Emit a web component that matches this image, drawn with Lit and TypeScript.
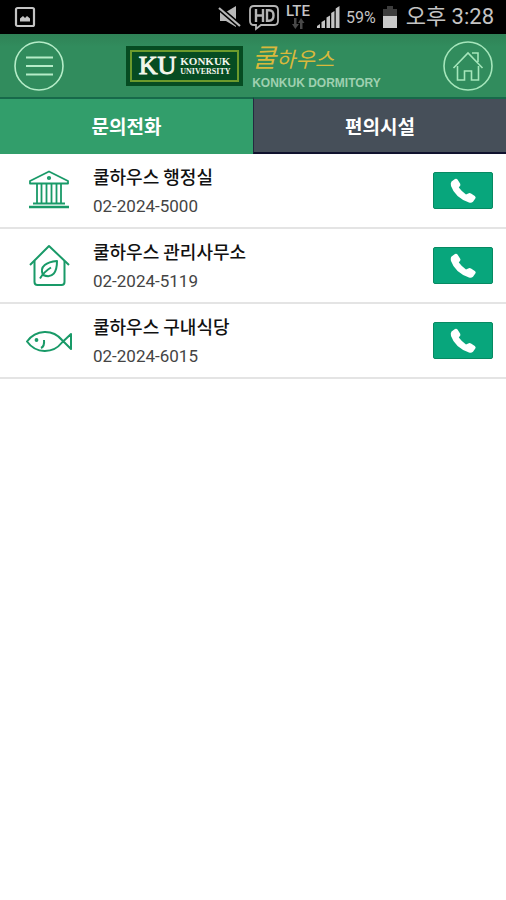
import { LitElement, html, css, svg } from "lit";
import { customElement, state } from "lit/decorators.js";

interface Contact {
  name: string;
  phone: string;
  icon: unknown;
}

const bankIcon = svg`
  <path d="M4 15.500V13L23 3.500 42 13v2.500z" />
  <path d="M11 16v19M15.500 16v19M20.500 16v19M25.500 16v19M30.500 16v19M35 16v19" />
  <path d="M7 35.500h32" stroke-width="2" />
  <path d="M3 39h40" stroke-width="2.500" />
  <circle cx="23" cy="10" r="1.200" />`;

const ecoHouseIcon = svg`
  <path d="M4 22 23 3l20 19" stroke-width="2" />
  <path d="M8.500 18v21q0 3 3 3h24q3 0 3-3V18" stroke-width="2" />
  <path d="M17 32c-4-9 4-13 14-14 0 11-4 18-14 14z" stroke-width="2" />
  <path d="M14 35.500c3-5 6-8 11-11" stroke-width="2" />`;

const fishIcon = svg`
  <path d="M1 23.500C10 11 27 11 36 22l9 9V16l-9 8.500C27 36 10 36 1 23.500z" stroke-width="2" />
  <path d="M18 22c.5 4-1 7-3 8" stroke-width="2" />
  <circle cx="10.500" cy="22" r="1" />`;

const contacts: Contact[] = [
  { name: "쿨하우스 행정실", phone: "02-2024-5000", icon: bankIcon },
  { name: "쿨하우스 관리사무소", phone: "02-2024-5119", icon: ecoHouseIcon },
  { name: "쿨하우스 구내식당", phone: "02-2024-6015", icon: fishIcon },
];

@customElement("status-bar")
class StatusBar extends LitElement {
  static styles = css`
    :host {
      display: flex;
      align-items: center;
      height: 34px;
      padding: 0 12px 0 14px;
      box-sizing: border-box;
      background: #000;
      color: #c4c4c4;
      font-family: Roboto, "Noto Sans CJK KR", sans-serif;
      white-space: nowrap;
    }
    svg {
      display: block;
      flex: none;
    }
    .spacer {
      flex: 1;
    }
    .icons {
      display: flex;
      align-items: center;
      gap: 6px;
    }
    .battery {
      font-size: 16px;
    }
    .lte {
      display: flex;
      flex-direction: column;
      align-items: center;
      font-size: 15px;
      font-weight: 500;
      line-height: 13px;
    }
    .time {
      margin-left: 8px;
      font-size: 22px;
      line-height: 34px;
    }
  `;

  render() {
    return html`
      <svg width="22" height="22" viewBox="0 0 22 22" fill="none" stroke="#c4c4c4">
        <rect x="2" y="2" width="18" height="18" rx="1.500" stroke-width="2.200" />
        <path d="M6 15.500v-3l3-2.500 2 2 2-2 3 2.500v3z" fill="#c4c4c4" stroke="none" />
      </svg>
      <span class="spacer"></span>
      <div class="icons">
        <svg width="24" height="24" viewBox="0 0 24 24">
          <path d="M2 7h6l10-6v21l-10-6H2z" fill="#b8b8b8" />
          <path d="M1 3l21 18" stroke="#000" stroke-width="5" />
          <path d="M1 3l21 18" stroke="#b8b8b8" stroke-width="2.200" />
        </svg>
        <svg width="32" height="28" viewBox="0 0 32 28" fill="none" stroke="#b4b4b4">
          <path d="M6 3h20q4 0 4 4v11q0 4-4 4H13l-5 4v-4H6q-4 0-4-4V7q0-4 4-4z" stroke-width="1.800" />
          <path d="M8 6v13M15 6v13M8 12.500h7M19 7.200v10.600h2q4.500 0 4.500-5.300T21 7.200z" stroke-width="2.400" />
        </svg>
        <div class="lte">
          <span>LTE</span>
          <svg width="14" height="11" viewBox="0 0 14 11" fill="#484848">
            <path d="M3 0h2.500v6H8l-3.700 5L1 6h2zM9 11V5H7l3-5 3.500 5h-2v6z" />
          </svg>
        </div>
        <svg width="24" height="24" viewBox="0 0 24 24" fill="#c4c4c4">
          <path d="M1 23v-2l3-2v4zM5.500 23v-6L9 15v8zM10.500 23V12.500l3.500-2V23zM15.200 23V8l3.300-2v17zM19.700 23V3.500L23.500 1v22z" />
        </svg>
        <span class="battery">59%</span>
        <svg width="16" height="24" viewBox="0 0 16 24">
          <path d="M5 1h6v3h4v7H1V4h4z" fill="#3d3d3d" />
          <path d="M1 11h14v12H1z" fill="#c9c9c9" />
        </svg>
      </div>
      <span class="time">오후 3:28</span>
    `;
  }
}

@customElement("app-root")
class AppRoot extends LitElement {
  @state() private tab = 0;

  static styles = css`
    :host {
      display: block;
      min-height: 100vh;
      background: #fff;
      font-family: Roboto, "Noto Sans CJK KR", sans-serif;
    }
    button {
      padding: 0;
      border: 0;
      background: none;
      font: inherit;
      color: inherit;
      cursor: pointer;
    }
    svg {
      display: block;
      flex: none;
    }
    .header {
      display: flex;
      align-items: center;
      justify-content: space-between;
      height: 63px;
      padding: 0 13px 0 14px;
      background: linear-gradient(#2f8256, #318c5d 20%, #318c5d);
    }
    .brand {
      display: flex;
      align-items: center;
      gap: 9px;
    }
    .crest {
      padding: 4px;
      background: #064c22;
    }
    .plate {
      display: flex;
      align-items: center;
      justify-content: center;
      gap: 4px;
      width: 105px;
      height: 28px;
      border: 2px solid #6c9a2c;
      color: #f3f6ec;
      font-family: "Liberation Serif", serif;
    }
    .initials {
      font-size: 26px;
      line-height: 28px;
      -webkit-text-stroke: 1px #f3f6ec;
    }
    .school {
      display: flex;
      flex-direction: column;
      font-weight: 700;
      font-size: 11px;
      line-height: 11px;
    }
    .school small {
      font-size: 8px;
      line-height: 9px;
    }
    .dorm {
      display: flex;
      flex-direction: column;
      gap: 4px;
    }
    .script {
      color: #d9b93c;
      font-family: "Noto Sans CJK KR", sans-serif;
      font-size: 21px;
      font-style: italic;
      font-weight: 400;
      line-height: 28px;
    }
    .script::first-letter {
      font-size: 26px;
    }
    .latin {
      color: #9fd0b0;
      font-family: "Liberation Sans", sans-serif;
      font-size: 12px;
      font-weight: 700;
      line-height: 14px;
    }
    .tabs {
      display: grid;
      grid-template-columns: 1fr 1fr;
      height: 57px;
    }
    .tab {
      border-top: 2px solid #17694a;
      background: #464f59;
      color: #fff;
      font-family: "Noto Sans CJK KR", sans-serif;
      font-size: 19px;
      font-weight: 700;
      border-bottom: 2px solid #10122e;
      border-left: 1px solid #25293f;
    }
    .tab.active {
      background: #329e6b;
      border-left: 0;
      border-bottom-color: #329e6b;
    }
    .list {
      margin: 0;
      padding: 0;
      list-style: none;
    }
    .row {
      display: flex;
      align-items: center;
      height: 75px;
      padding: 0 13px 0 26px;
      box-sizing: border-box;
      border-bottom: 2px solid #e4e4e4;
    }
    .info {
      display: flex;
      flex: 1;
      flex-direction: column;
      margin-left: 21px;
    }
    .name {
      color: #111;
      font-family: "Noto Sans CJK KR", sans-serif;
      font-size: 18px;
      font-weight: 500;
      line-height: 30px;
    }
    .phone {
      color: #444;
      font-size: 17px;
      line-height: 30px;
    }
    .call {
      display: grid;
      place-items: center;
      width: 60px;
      height: 37px;
      border: 1px solid #078a62;
      border-radius: 2px;
      background: #08a67c;
      box-sizing: border-box;
    }
  `;

  render() {
    return html`
      <status-bar></status-bar>
      <header class="header">
        <button aria-label="메뉴">
          <svg width="50" height="50" viewBox="0 0 50 50" fill="none" stroke="#b5ecc8">
            <circle cx="25" cy="25" r="24" stroke-width="1.600" />
            <path d="M12 16.500h27M12 25h27M12 33.500h27" stroke-width="2.200" />
          </svg>
        </button>
        <div class="brand">
          <div class="crest">
            <div class="plate">
              <span class="initials">KU</span>
              <span class="school">KONKUK<small>UNIVERSITY</small></span>
            </div>
          </div>
          <div class="dorm">
            <div class="script">쿨하우스</div>
            <div class="latin">KONKUK DORMITORY</div>
          </div>
        </div>
        <button aria-label="홈">
          <svg width="50" height="50" viewBox="0 0 50 50" fill="none" stroke="#a5e6bb">
            <circle cx="25" cy="25" r="24" stroke-width="1.600" />
            <path d="M10.500 27 25 12l14.500 15M29 12h6v9" stroke-width="1.600" />
            <path d="M14.500 25v14h7v-9h7v9h7V25" stroke-width="1.600" />
          </svg>
        </button>
      </header>
      <nav class="tabs">
        ${["문의전화", "편의시설"].map(
          (label, i) => html`<button
            class="tab ${this.tab === i ? "active" : ""}"
            @click=${() => (this.tab = i)}
          >${label}</button>`
        )}
      </nav>
      <ul class="list">
        ${contacts.map(
          (c) => html`<li class="row">
            <svg width="46" height="46" viewBox="0 0 46 46" fill="none" stroke="#199a68"
              stroke-width="1.800" stroke-linejoin="round">${c.icon}</svg>
            <div class="info">
              <span class="name">${c.name}</span>
              <span class="phone">${c.phone}</span>
            </div>
            <button class="call" aria-label="${c.name} 전화 걸기">
              <svg width="28" height="28" viewBox="0 0 28 28" fill="#fff">
                <path d="M2.500 4.500 6 2q1.500-.8 2.500.6l2.700 4.200q.7 1.500-.5 2.500l-.9 1.200q3 4 7.200 7l2.200-1q1.500-.8 2.800 0l3.800 2.500q1.500 1.200.5 2.600l-2.300 3.200q-1.500 1.500-4 .8Q6 20.500 2 9 1.300 6 2.500 4.500z" />
              </svg>
            </button>
          </li>`
        )}
      </ul>
    `;
  }
}
